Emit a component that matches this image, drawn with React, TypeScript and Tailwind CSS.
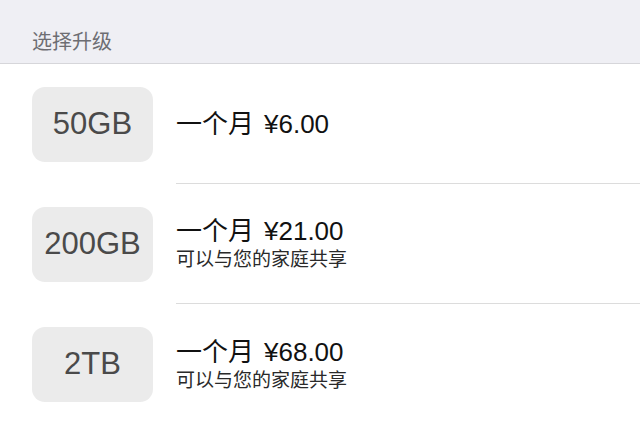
import React from "react";

const rows = [
  { size: "50GB", price: "¥6.00", sub: null as string | null },
  { size: "200GB", price: "¥21.00", sub: "可以与您的家庭共享" },
  { size: "2TB", price: "¥68.00", sub: "可以与您的家庭共享" },
];

export default function App() {
  return (
    <div
      className="w-[640px] h-[424px] overflow-hidden bg-white"
      style={{ fontFamily: '"Liberation Sans", "Noto Sans CJK SC", sans-serif' }}
    >
      <div className="h-[64px] bg-[#efeff4] border-b border-[#d6d6da] flex items-end pl-[32px] pb-[11px]">
        <span className="text-[20px] leading-none text-[#6d6d72]">选择升级</span>
      </div>
      <div className="border-b border-[#dcdcdc]">
        {rows.map((r, i) => (
          <div key={r.size} className="flex h-[120px]">
            <div className="w-[176px] flex items-center pl-[32px]">
              <div className="w-[121px] h-[75px] rounded-[13px] bg-[#ebebeb] flex items-center justify-center text-[31px] text-[#4a4a4a]">
                {r.size}
              </div>
            </div>
            <div
              className={
                "flex-1 flex flex-col justify-center " +
                (i < rows.length - 1 ? "border-b border-[#dcdcdc]" : "")
              }
            >
              <div className="text-[26px] leading-[30px] text-[#111] whitespace-nowrap">
                <span>一个月</span>
                <span className="ml-[10px]">{r.price}</span>
              </div>
              {r.sub && (
                <div className="text-[19px] leading-[22px] text-[#2a2a2a] mt-[3px]">{r.sub}</div>
              )}
            </div>
          </div>
        ))}
      </div>
    </div>
  );
}
